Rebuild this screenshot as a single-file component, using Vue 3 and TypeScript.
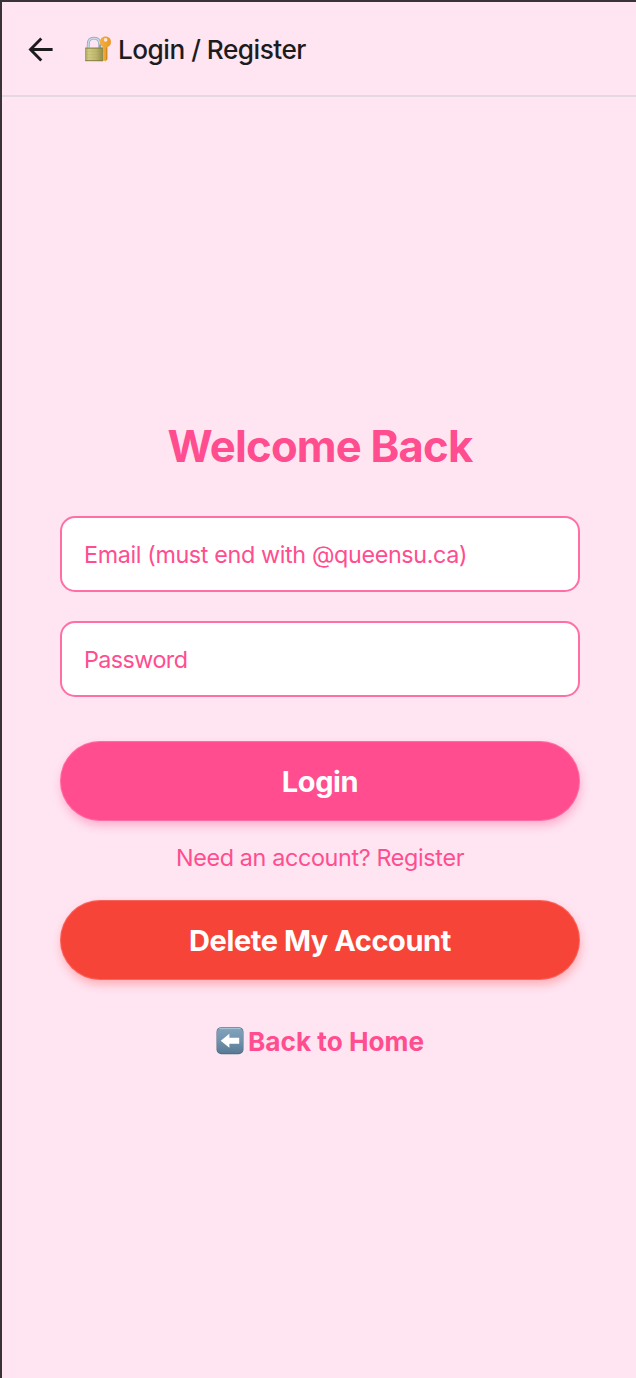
<script setup lang="ts">
import { ref } from 'vue'

const email = ref('')
const password = ref('')
</script>

<template>
  <div class="screen">
    <header class="bar">
      <button class="back" aria-label="Back">
        <svg width="26" height="26" viewBox="0 0 26 26" fill="none" stroke="#1c1c1e" stroke-width="2.9">
          <path d="M13.3 1.6 2.5 12.5 13.3 23.4M2.6 12.5H24.6" />
        </svg>
      </button>
      <svg class="lock" width="28" height="26" viewBox="0 0 28 26">
        <defs>
          <linearGradient id="brass" x1="0" y1="0" x2="1" y2="0">
            <stop offset="0" stop-color="#a8a05a" />
            <stop offset=".2" stop-color="#d3ca82" />
            <stop offset=".6" stop-color="#bdb56c" />
            <stop offset="1" stop-color="#8d8848" />
          </linearGradient>
          <linearGradient id="gold" x1="0" y1="0" x2="1" y2="0">
            <stop offset="0" stop-color="#f5b03a" />
            <stop offset="1" stop-color="#e89a26" />
          </linearGradient>
        </defs>
        <path d="M4.2 13V8.5C4.2 4.5 6.5 2.2 10 2.2s5.8 2.3 5.8 6.3V13" fill="none" stroke="#8fa3b8" stroke-width="2.8" />
        <path d="M4.2 13V8.5C4.2 4.5 6.5 2.2 10 2.2s5.8 2.3 5.8 6.3" fill="none" stroke="#c8d8e8" stroke-width="1.4" />
        <rect x="1" y="11.5" width="18.5" height="13.8" rx="1" fill="url(#brass)" />
        <path d="M1.3 12.2H19M1.3 24.6H19" stroke="#858044" stroke-width=".9" />
        <path d="M2 15.5H19M2 18.5H19M2 21.5H19" stroke="#9b9552" stroke-width=".5" opacity=".3" />
        <path fill-rule="evenodd" d="M21.5.6c3.5 0 5.5 2.3 5.5 5.3 0 2.5-1.3 4.2-3.4 5.1v12.2l-2.1 2.3-2.5-1.8v-1.4l1-.9-1-1v-1.4l1-1-1-1V11c-1.8-.9-3-2.7-3-5.1 0-3 2-5.3 5.5-5.3Zm.1 1.5a1.8 1.8 0 1 0 0 3.6 1.8 1.8 0 0 0 0-3.6Z" fill="url(#gold)" />
        <path d="M22.4 11.5V24" stroke="#c87d1d" stroke-width=".8" />
      </svg>
      <h1 class="bar-title">Login / Register</h1>
    </header>

    <main class="content">
      <h2 class="heading">Welcome Back</h2>
      <input v-model="email" class="field email" type="email" placeholder="Email (must end with @queensu.ca)" />
      <input v-model="password" class="field password" type="password" placeholder="Password" />
      <button class="pill login"><span>Login</span></button>
      <a class="switch">Need an account? Register</a>
      <button class="pill delete"><span>Delete My Account</span></button>
      <a class="home">
        <svg class="home-icon" width="28" height="28" viewBox="0 0 28 28">
          <defs>
            <linearGradient id="tile" x1="0" y1="0" x2="0" y2="1">
              <stop offset="0" stop-color="#82a3bb" />
              <stop offset=".5" stop-color="#7293ae" />
              <stop offset="1" stop-color="#587a94" />
            </linearGradient>
          </defs>
          <rect x=".5" y=".2" width="27" height="27" rx="4.8" fill="#4f6b80" />
          <rect x="1" y=".7" width="26" height="25.6" rx="4.4" fill="url(#tile)" />
          <path d="M4 1.6H24" stroke="#abc7d8" stroke-width="1" stroke-linecap="round" />
          <path d="M4.7 13.8 13.4 6.8v4h9.8v5.9h-9.8v4Z" fill="#fff" />
        </svg>
        <span>Back to Home</span>
      </a>
    </main>
  </div>
</template>

<style>
body {
  margin: 0;
  background: #ffe4f1;
}
</style>

<style scoped>
.screen {
  box-sizing: border-box;
  width: 636px;
  height: 1378px;
  border-top: 2px solid #393237;
  border-left: 2px solid #393237;
  background: #ffe4f1;
  font-family: Inter, "Liberation Sans", sans-serif;
  color: #ff4d8f;
  overflow: hidden;
}

.bar {
  box-sizing: border-box;
  height: 95px;
  display: flex;
  align-items: center;
  padding-left: 26px;
  border-bottom: 2px solid #e3d9df;
}

button {
  border: 0;
  padding: 0;
  background: none;
  font-family: inherit;
}

.back {
  display: flex;
  width: 26px;
  height: 26px;
  margin-top: 2px;
}

.lock {
  margin-left: 30px;
}

.bar-title {
  margin: 2px 0 0 6px;
  font-size: 26.2px;
  line-height: 34px;
  font-weight: 500;
  letter-spacing: -0.5px;
  white-space: nowrap;
  color: #1c1c1e;
}

.content {
  display: flex;
  flex-direction: column;
  align-items: center;
  padding: 323px 56px 0 58px;
}

.heading {
  margin: 0 0 42px;
  font-size: 43.6px;
  line-height: 54px;
  font-weight: 700;
  letter-spacing: -0.8px;
  white-space: nowrap;
}

.field {
  box-sizing: border-box;
  width: 100%;
  height: 76px;
  margin: 0 0 29px;
  padding: 0 22px;
  border: 2px solid #ff6ea4;
  border-radius: 15px;
  background: #fff;
  outline: none;
  font-family: inherit;
  font-size: 23.3px;
  letter-spacing: -0.35px;
  color: #ff4d8f;
}

.field::placeholder {
  color: #ff4d8f;
  opacity: 1;
}

.password {
  margin-bottom: 44px;
  letter-spacing: -0.55px;
}

.pill {
  flex: none;
  width: 100%;
  height: 80px;
  padding-top: 1px;
  border-radius: 40px;
  color: #fff;
  font-size: 29px;
  line-height: 36px;
  font-weight: 700;
  letter-spacing: -0.43px;
  white-space: nowrap;
}

.login {
  background: #ff4d8f;
  box-shadow: inset 0 0 0 1px rgba(255, 228, 241, 0.2), 1px 5px 8px rgba(255, 77, 143, 0.33);
}

.delete {
  background: #f74438;
  box-shadow: inset 0 0 0 1px rgba(255, 228, 241, 0.2), 1px 5px 8px rgba(255, 77, 77, 0.33);
}

.switch {
  margin: 22px 0 27px;
  font-size: 23.3px;
  line-height: 30px;
  letter-spacing: -0.33px;
  white-space: nowrap;
}

.home {
  display: flex;
  align-items: center;
  gap: 4px;
  margin-top: 45px;
  font-size: 26.2px;
  line-height: 34px;
  font-weight: 700;
  letter-spacing: 0;
  white-space: nowrap;
}

.home-icon {
  margin-bottom: 2px;
}
</style>
